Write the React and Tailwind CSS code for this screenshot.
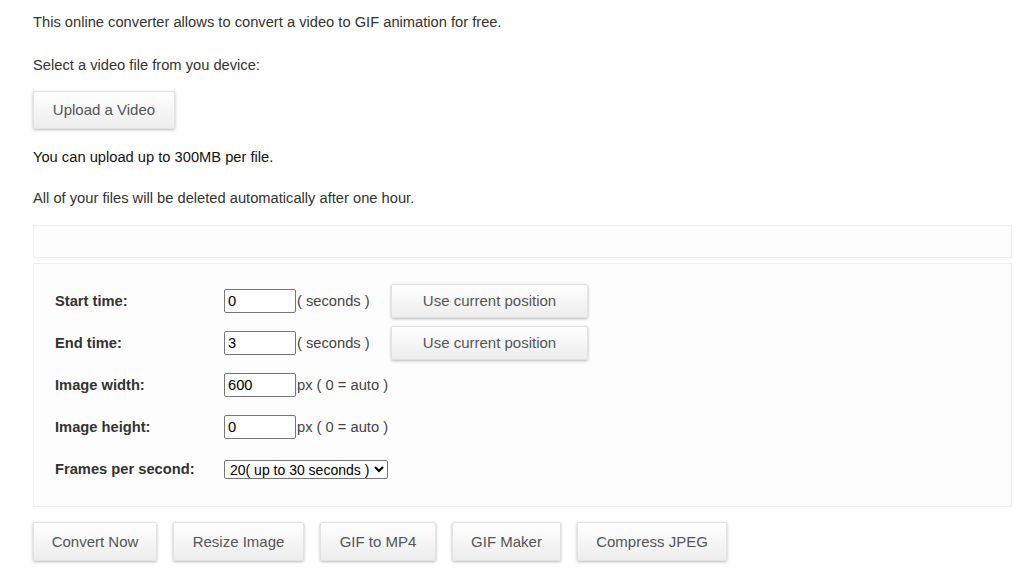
import { useState } from 'react'

const btn =
    'flex items-center justify-center rounded-[2px] border border-[#e2e2e2] bg-gradient-to-b from-white to-[#ededed] text-[#555] text-[15px] shadow-[0_1px_3px_rgba(0,0,0,0.28)]'

const Row = ({ label, children }) => (
    <div className="flex h-[42px] items-center">
        <div className="w-[169px] font-bold text-[#333]">{label}</div>
        <div className="flex items-center">{children}</div>
    </div>
)

const NumInput = ({ value, onChange }) => (
    <input
        value={value}
        onChange={(e) => onChange(e.target.value)}
        className="h-[24px] w-[72px] border border-[#767676] rounded-[2px] bg-white px-[3px] text-[14.7px] text-black outline-none"
    />
)

export default function App() {
    const [start, setStart] = useState('0')
    const [end, setEnd] = useState('3')
    const [width, setWidth] = useState('600')
    const [height, setHeight] = useState('0')
    const [fps, setFps] = useState('20')

    const links = [
        { label: 'Convert Now', w: 'w-[124px]' },
        { label: 'Resize Image', w: 'w-[131px]' },
        { label: 'GIF to MP4', w: 'w-[116px]' },
        { label: 'GIF Maker', w: 'w-[109px]' },
        { label: 'Compress JPEG', w: 'w-[150px]' },
    ]

    return (
        <div className="min-h-[570px] bg-white pl-[33px] pr-[12px] text-[14.7px] leading-[20px] text-[#333] font-['Liberation_Sans',Arial,sans-serif]">
            <p className="pt-[12px]">This online converter allows to convert a video to GIF animation for free.</p>
            <p className="mt-[23px]">Select a video file from you device:</p>

            <button className={`${btn} mt-[16px] h-[38px] w-[142px]`}>Upload a Video</button>

            <p className="mt-[18px] text-[#111]">You can upload up to 300MB per file.</p>
            <p className="mt-[21px]">All of your files will be deleted automatically after one hour.</p>

            {/* progress / preview area */}
            <div className="mt-[17px] h-[33px] w-[979px] border border-[#efefef] bg-[#fdfdfd]" />

            {/* options */}
            <div className="mt-[5px] h-[244px] w-[979px] border border-[#efefef] bg-[#fdfdfd] pl-[21px] pt-[16px]">
                <Row label="Start time:">
                    <NumInput value={start} onChange={setStart} />
                    <span className="w-[95px] pl-[1px] text-[#444]">( seconds )</span>
                    <button className={`${btn} h-[34px] w-[197px]`}>Use current position</button>
                </Row>
                <Row label="End time:">
                    <NumInput value={end} onChange={setEnd} />
                    <span className="w-[95px] pl-[1px] text-[#444]">( seconds )</span>
                    <button className={`${btn} h-[34px] w-[197px]`}>Use current position</button>
                </Row>
                <Row label="Image width:">
                    <NumInput value={width} onChange={setWidth} />
                    <span className="pl-[1px] text-[#444]">px ( 0 = auto )</span>
                </Row>
                <Row label="Image height:">
                    <NumInput value={height} onChange={setHeight} />
                    <span className="pl-[1px] text-[#444]">px ( 0 = auto )</span>
                </Row>
                <Row label="Frames per second:">
                    <select
                        value={fps}
                        onChange={(e) => setFps(e.target.value)}
                        className="h-[19px] w-[164px] border border-[#767676] rounded-[2px] bg-white pl-[1px] text-[14px] leading-[17px] text-black outline-none"
                    >
                        <option value="5">5( up to 120 seconds )</option>
                        <option value="10">10( up to 60 seconds )</option>
                        <option value="20">20( up to 30 seconds )</option>
                        <option value="25">25( up to 24 seconds )</option>
                    </select>
                </Row>
            </div>

            <div className="mt-[15px] flex gap-[16px]">
                {links.map(({ label, w }) => (
                    <button key={label} className={`${btn} h-[39px] ${w}`}>{label}</button>
                ))}
            </div>
        </div>
    )
}
